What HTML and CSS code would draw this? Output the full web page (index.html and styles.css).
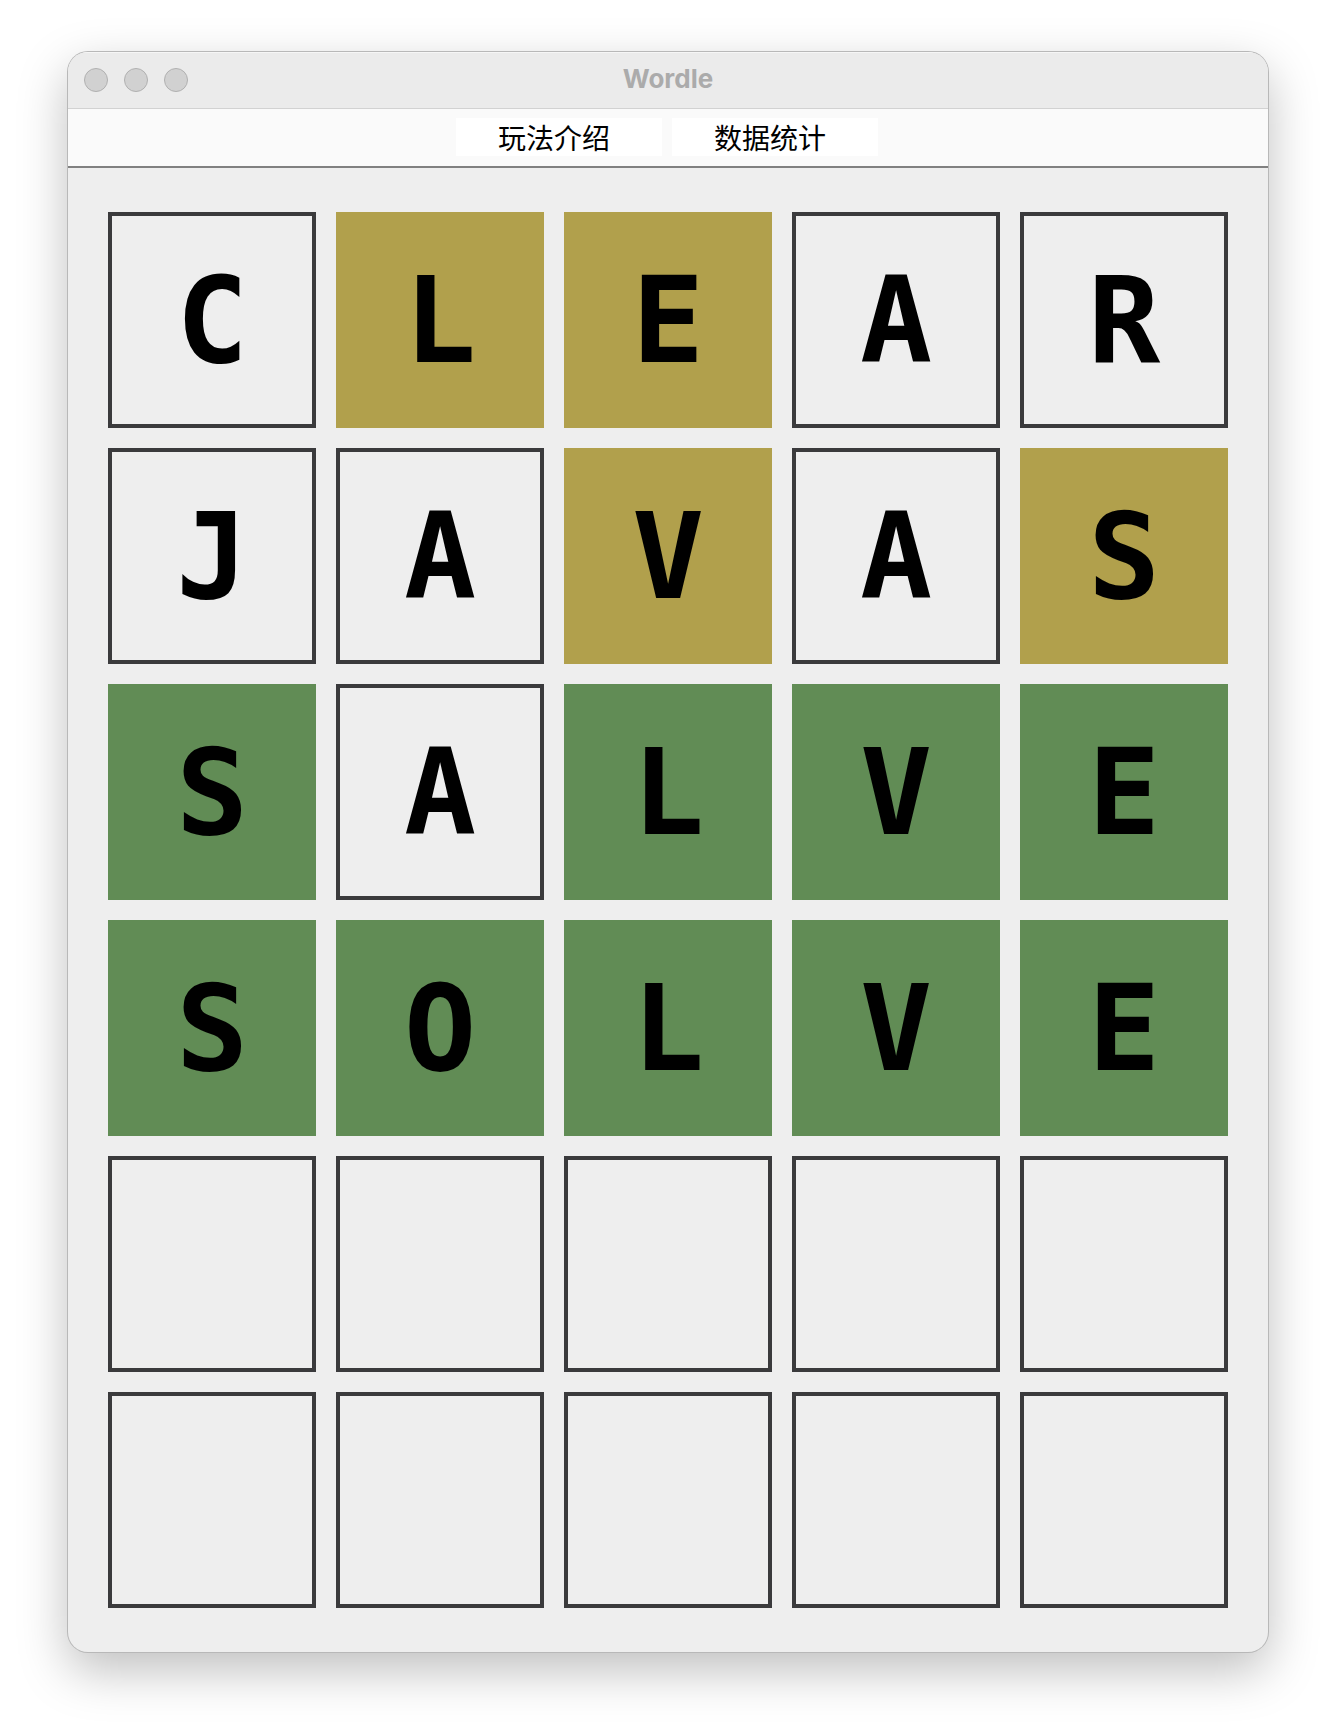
FILE: index.html
```html
<!DOCTYPE html>
<html lang="zh-CN">
<head>
<meta charset="utf-8">
<meta name="viewport" content="width=device-width, initial-scale=1">
<title>Wordle</title>
<link rel="stylesheet" href="styles.css">
</head>
<body>
<div class="window">
  <header class="titlebar">
    <div class="controls">
      <button class="control" type="button" aria-label="关闭"></button>
      <button class="control" type="button" aria-label="最小化"></button>
      <button class="control" type="button" aria-label="缩放"></button>
    </div>
    <h1 class="title" lang="en">Wordle</h1>
  </header>
  <nav class="menubar">
    <button class="menu" type="button">玩法介绍</button>
    <button class="menu" type="button">数据统计</button>
  </nav>
  <main class="board">
    <div class="tile">C</div>
    <div class="tile present">L</div>
    <div class="tile present">E</div>
    <div class="tile">A</div>
    <div class="tile">R</div>

    <div class="tile">J</div>
    <div class="tile">A</div>
    <div class="tile present">V</div>
    <div class="tile">A</div>
    <div class="tile present">S</div>

    <div class="tile correct">S</div>
    <div class="tile">A</div>
    <div class="tile correct">L</div>
    <div class="tile correct">V</div>
    <div class="tile correct">E</div>

    <div class="tile correct">S</div>
    <div class="tile correct">O</div>
    <div class="tile correct">L</div>
    <div class="tile correct">V</div>
    <div class="tile correct">E</div>

    <div class="tile"></div>
    <div class="tile"></div>
    <div class="tile"></div>
    <div class="tile"></div>
    <div class="tile"></div>

    <div class="tile"></div>
    <div class="tile"></div>
    <div class="tile"></div>
    <div class="tile"></div>
    <div class="tile"></div>
  </main>
</div>
</body>
</html>
```
FILE: styles.css
```css
* {
  box-sizing: border-box;
}

body {
  margin: 0;
  padding: 52px 68px 84px;
  background: #fff;
  color: #000;
  font-family: Inter, "Noto Sans CJK SC", sans-serif;
}

.window {
  overflow: hidden;
  border-radius: 20px;
  background: #eee;
  box-shadow: 0 0 0 1px #b8b8b8, 0 18px 50px rgba(0, 0, 0, 0.26);
}

.titlebar {
  display: grid;
  grid-template-columns: 1fr auto 1fr;
  align-items: center;
  height: 57px;
  padding: 0 16px;
  border-bottom: 1px solid #d2d2d2;
  background: #ebebeb;
  box-shadow: inset 0 1px #f6f6f6;
}

.controls {
  display: flex;
  gap: 16px;
}

.control {
  width: 24px;
  height: 24px;
  padding: 0;
  border: 1px solid #b0b0b0;
  border-radius: 50%;
  background: #d1d1d1;
}

.title {
  margin: 0;
  padding-bottom: 2px;
  color: #ababab;
  font-size: 26px;
  font-weight: 700;
  line-height: 32px;
}

.menubar {
  display: flex;
  justify-content: center;
  gap: 10px;
  padding: 9px 2px 10px 0;
  border-bottom: 2px solid #808080;
  background: #fafafa;
}

.menu {
  width: 206px;
  height: 38px;
  padding: 0 0 0 42px;
  border: 0;
  background: #fff;
  color: #000;
  font-family: "Noto Sans CJK SC", sans-serif;
  font-size: 28px;
  line-height: 38px;
  text-align: left;
}

.board {
  display: grid;
  grid-template-columns: repeat(5, minmax(0, 1fr));
  gap: 20px;
  padding: 44px 40px;
}

.tile {
  display: flex;
  align-items: center;
  justify-content: center;
  aspect-ratio: 26 / 27;
  padding-top: 2px;
  border: 4px solid #3a3a3c;
  font-family: "DejaVu Sans Mono", monospace;
  font-size: 120px;
  font-weight: 700;
  line-height: 140px;
}

.present {
  border-color: #b1a04c;
  background: #b1a04c;
}

.correct {
  border-color: #618c55;
  background: #618c55;
}
```
